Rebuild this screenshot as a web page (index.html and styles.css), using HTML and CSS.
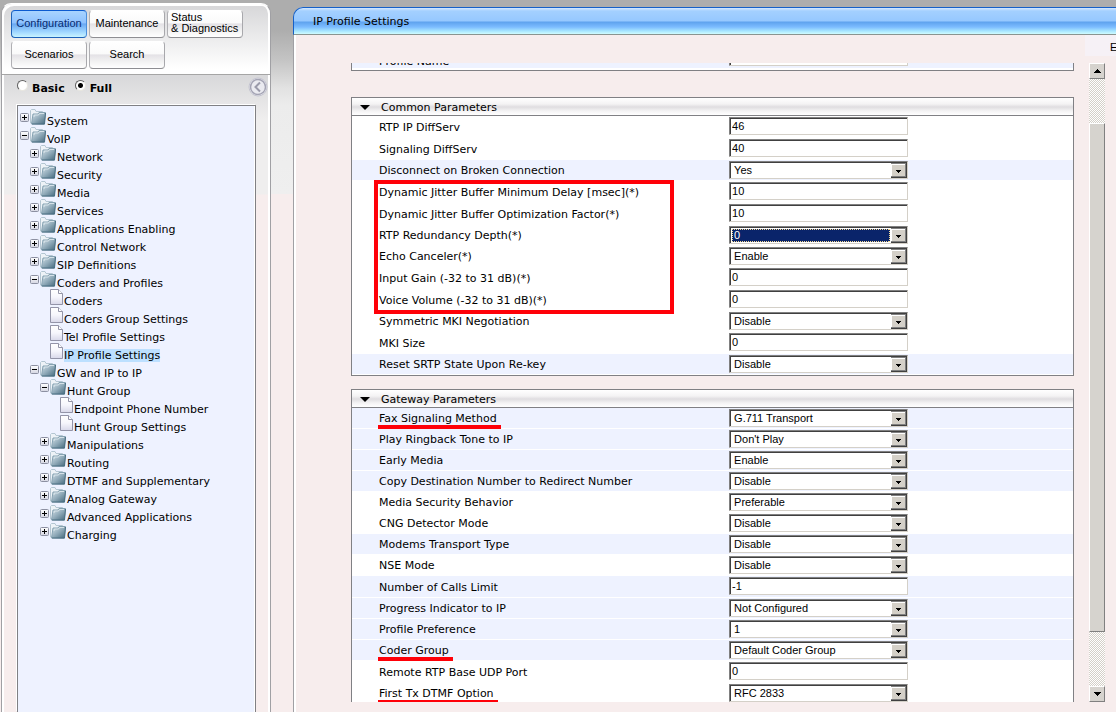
FILE: index.html
```html
<!DOCTYPE html>
<html lang="en">
<head>
<meta charset="utf-8">
<title>IP Profile Settings</title>
<link rel="stylesheet" href="styles.css">
</head>
<body>
<svg class="defs" aria-hidden="true">
  <defs>
    <linearGradient id="gFolder" x1="0" y1="0" x2="1" y2="1">
      <stop offset="0" stop-color="#d8e4ea"/><stop offset=".5" stop-color="#8fa9b8"/><stop offset="1" stop-color="#3f6478"/>
    </linearGradient>
    <linearGradient id="gPage" x1="0" y1="0" x2="0" y2="1">
      <stop offset="0" stop-color="#fff"/><stop offset=".5" stop-color="#f6f6fc"/><stop offset="1" stop-color="#d8d8ea"/>
    </linearGradient>
    <linearGradient id="gBox" x1="0" y1="0" x2="0" y2="1">
      <stop offset="0" stop-color="#fff"/><stop offset="1" stop-color="#d4d6e2"/>
    </linearGradient>
    <symbol id="folder" viewBox="0 0 17 16">
      <path d="M.5 14V1.500L1.500.5H5l1 2h6.500V14z" fill="#eef3f7" stroke="#b4c6d2"/>
      <path d="M1.500 15.500l1.500-10.500h5l1-1.500h7l-1.500 12z" fill="url(#gFolder)"/>
      <path d="M1.500 15l1.500-10h5l1-1.500h6.500" fill="none" stroke="#86a2b2"/>
      <path d="M15.500 4l-1 11H2" fill="none" stroke="#4a6f82"/>
      <path d="M4 8l.3-2h4.200l1-1.500h4.500" fill="none" stroke="#e3edf2" stroke-width=".8"/>
    </symbol>
    <symbol id="page" viewBox="0 0 13 16">
      <path d="M.5.5h8l4 4v11H.5z" fill="url(#gPage)" stroke="#9394a8"/>
      <path d="M8.500.5v4h4" fill="#fff" stroke="#9394a8"/>
    </symbol>
    <symbol id="plus" viewBox="0 0 9 9">
      <rect x=".5" y=".5" width="8" height="8" rx="1" fill="url(#gBox)" stroke="#8c90a2"/>
      <path d="M2 4.500h5M4.500 2v5" stroke="#000"/>
    </symbol>
    <symbol id="minus" viewBox="0 0 9 9">
      <rect x=".5" y=".5" width="8" height="8" rx="1" fill="url(#gBox)" stroke="#8c90a2"/>
      <path d="M2 4.500h5" stroke="#000"/>
    </symbol>
  </defs>
</svg>

<div class="app">
  <aside class="sidebar">
    <nav class="tabs">
      <button type="button" class="tab tab-active">Configuration</button>
      <button type="button" class="tab">Maintenance</button>
      <button type="button" class="tab tab-two">Status<br>&amp; Diagnostics</button>
      <button type="button" class="tab">Scenarios</button>
      <button type="button" class="tab">Search</button>
    </nav>
    <div class="mode">
      <input type="radio" name="mode" id="mode-basic"><label for="mode-basic">Basic</label>
      <input type="radio" name="mode" id="mode-full" checked><label for="mode-full">Full</label>
      <button type="button" class="collapse" aria-label="Collapse">
        <svg viewBox="0 0 20 20"><circle cx="10" cy="10" r="9" fill="#f4f4f8" stroke="#c4c4d0"/><circle cx="10" cy="10" r="7.500" fill="#eaeaf0" stroke="#a4a4b4" stroke-width="1.500"/><path d="M12 5.500L7.500 10l4.500 4.500" fill="none" stroke="#9a9aaa" stroke-width="2"/></svg>
      </button>
    </div>
    <ul class="tree">
      <li><svg class="tog"><use href="#plus"/></svg><svg class="fold"><use href="#folder"/></svg><a href="#">System</a></li>
      <li><svg class="tog"><use href="#minus"/></svg><svg class="fold"><use href="#folder"/></svg><a href="#">VoIP</a></li>
      <li class="l1"><svg class="tog"><use href="#plus"/></svg><svg class="fold"><use href="#folder"/></svg><a href="#">Network</a></li>
      <li class="l1"><svg class="tog"><use href="#plus"/></svg><svg class="fold"><use href="#folder"/></svg><a href="#">Security</a></li>
      <li class="l1"><svg class="tog"><use href="#plus"/></svg><svg class="fold"><use href="#folder"/></svg><a href="#">Media</a></li>
      <li class="l1"><svg class="tog"><use href="#plus"/></svg><svg class="fold"><use href="#folder"/></svg><a href="#">Services</a></li>
      <li class="l1"><svg class="tog"><use href="#plus"/></svg><svg class="fold"><use href="#folder"/></svg><a href="#">Applications Enabling</a></li>
      <li class="l1"><svg class="tog"><use href="#plus"/></svg><svg class="fold"><use href="#folder"/></svg><a href="#">Control Network</a></li>
      <li class="l1"><svg class="tog"><use href="#plus"/></svg><svg class="fold"><use href="#folder"/></svg><a href="#">SIP Definitions</a></li>
      <li class="l1"><svg class="tog"><use href="#minus"/></svg><svg class="fold"><use href="#folder"/></svg><a href="#">Coders and Profiles</a></li>
      <li class="l3"><svg class="leaf"><use href="#page"/></svg><a href="#">Coders</a></li>
      <li class="l3"><svg class="leaf"><use href="#page"/></svg><a href="#">Coders Group Settings</a></li>
      <li class="l3"><svg class="leaf"><use href="#page"/></svg><a href="#">Tel Profile Settings</a></li>
      <li class="l3"><svg class="leaf"><use href="#page"/></svg><a href="#" class="current">IP Profile Settings</a></li>
      <li class="l1"><svg class="tog"><use href="#minus"/></svg><svg class="fold"><use href="#folder"/></svg><a href="#">GW and IP to IP</a></li>
      <li class="l2"><svg class="tog"><use href="#minus"/></svg><svg class="fold"><use href="#folder"/></svg><a href="#">Hunt Group</a></li>
      <li class="l4"><svg class="leaf"><use href="#page"/></svg><a href="#">Endpoint Phone Number</a></li>
      <li class="l4"><svg class="leaf"><use href="#page"/></svg><a href="#">Hunt Group Settings</a></li>
      <li class="l2"><svg class="tog"><use href="#plus"/></svg><svg class="fold"><use href="#folder"/></svg><a href="#">Manipulations</a></li>
      <li class="l2"><svg class="tog"><use href="#plus"/></svg><svg class="fold"><use href="#folder"/></svg><a href="#">Routing</a></li>
      <li class="l2"><svg class="tog"><use href="#plus"/></svg><svg class="fold"><use href="#folder"/></svg><a href="#">DTMF and Supplementary</a></li>
      <li class="l2"><svg class="tog"><use href="#plus"/></svg><svg class="fold"><use href="#folder"/></svg><a href="#">Analog Gateway</a></li>
      <li class="l2"><svg class="tog"><use href="#plus"/></svg><svg class="fold"><use href="#folder"/></svg><a href="#">Advanced Applications</a></li>
      <li class="l2"><svg class="tog"><use href="#plus"/></svg><svg class="fold"><use href="#folder"/></svg><a href="#">Charging</a></li>
    </ul>
  </aside>

  <main class="main">
    <h1 class="title">IP Profile Settings</h1>
    <div class="toolbar"><button type="button" class="mode-link">E</button></div>
    <div class="viewport">
      <form class="scroll">
        <section class="group group-top">
          <div class="row row-in alt"><label for="p0">Profile Name</label><input type="text" id="p0"></div>
        </section>

        <section class="group group-common">
          <h2>Common Parameters</h2>
          <div class="row row-in"><label for="c1">RTP IP DiffServ</label><input type="text" id="c1" value="46"></div>
          <div class="row row-in"><label for="c2">Signaling DiffServ</label><input type="text" id="c2" value="40"></div>
          <div class="row alt"><label for="c3">Disconnect on Broken Connection</label><select id="c3"><option>Yes</option></select></div>
          <div class="marked">
            <div class="row row-in"><label for="c4">Dynamic Jitter Buffer Minimum Delay [msec](*)</label><input type="text" id="c4" value="10"></div>
            <div class="row row-in"><label for="c5">Dynamic Jitter Buffer Optimization Factor(*)</label><input type="text" id="c5" value="10"></div>
            <div class="row"><label for="c6">RTP Redundancy Depth(*)</label><select id="c6" class="picked"><option>0</option></select></div>
            <div class="row"><label for="c7">Echo Canceler(*)</label><select id="c7"><option>Enable</option></select></div>
            <div class="row row-in"><label for="c8">Input Gain (-32 to 31 dB)(*)</label><input type="text" id="c8" value="0"></div>
            <div class="row row-in"><label for="c9">Voice Volume (-32 to 31 dB)(*)</label><input type="text" id="c9" value="0"></div>
          </div>
          <div class="row"><label for="c10">Symmetric MKI Negotiation</label><select id="c10"><option>Disable</option></select></div>
          <div class="row row-in"><label for="c11">MKI Size</label><input type="text" id="c11" value="0"></div>
          <div class="row alt"><label for="c12">Reset SRTP State Upon Re-key</label><select id="c12"><option>Disable</option></select></div>
        </section>

        <section class="group group-gateway">
          <h2>Gateway Parameters</h2>
          <div class="row alt"><label for="g1"><span class="under">Fax Signaling Method</span></label><select id="g1"><option>G.711 Transport</option></select></div>
          <div class="row alt"><label for="g2">Play Ringback Tone to IP</label><select id="g2"><option>Don't Play</option></select></div>
          <div class="row alt"><label for="g3">Early Media</label><select id="g3"><option>Enable</option></select></div>
          <div class="row alt"><label for="g4">Copy Destination Number to Redirect Number</label><select id="g4"><option>Disable</option></select></div>
          <div class="row"><label for="g5">Media Security Behavior</label><select id="g5"><option>Preferable</option></select></div>
          <div class="row"><label for="g6">CNG Detector Mode</label><select id="g6"><option>Disable</option></select></div>
          <div class="row alt"><label for="g7">Modems Transport Type</label><select id="g7"><option>Disable</option></select></div>
          <div class="row"><label for="g8">NSE Mode</label><select id="g8"><option>Disable</option></select></div>
          <div class="row row-in alt"><label for="g9">Number of Calls Limit</label><input type="text" id="g9" value="-1"></div>
          <div class="row alt"><label for="g10">Progress Indicator to IP</label><select id="g10"><option>Not Configured</option></select></div>
          <div class="row alt"><label for="g11">Profile Preference</label><select id="g11"><option>1</option></select></div>
          <div class="row alt"><label for="g12"><span class="under">Coder Group</span></label><select id="g12"><option>Default Coder Group</option></select></div>
          <div class="row row-in"><label for="g13">Remote RTP Base UDP Port</label><input type="text" id="g13" value="0"></div>
          <div class="row"><label for="g14"><span class="under">First Tx DTMF Option</span></label><select id="g14"><option>RFC 2833</option></select></div>
        </section>
      </form>
      <div class="scrollbar">
        <button type="button" class="sb-btn" aria-label="Scroll up"><svg viewBox="0 0 7 4"><path d="M3 0h1v1h1v1h1v1h1v1H0V3h1V2h1V1h1z"/></svg></button>
        <div class="sb-above"></div>
        <div class="sb-thumb"></div>
        <div class="sb-below"></div>
        <button type="button" class="sb-btn" aria-label="Scroll down"><svg viewBox="0 0 7 4"><path d="M0 0h7v1H6v1H5v1H4v1H3V3H2V2H1V1H0z"/></svg></button>
      </div>
    </div>
  </main>
</div>
</body>
</html>
```

FILE: styles.css
```css
*, ::before, ::after { box-sizing: border-box; }

body {
  margin: 0;
  color: #000;
  font: 11px/13px "DejaVu Sans", Verdana, sans-serif;
  background: #f7eded linear-gradient(#adadad 0, #adadad 30px, #c4c4c4 60px, #e2e2e2 88px, #ececec 105px, #efefef 194px) no-repeat 0 0 / 100% 194px;
}

.defs { position: absolute; width: 0; height: 0; }

.app {
  display: flex;
  height: 100vh;
  overflow: hidden;
}

button { font: inherit; color: inherit; padding: 0; }

/* Sidebar */
.sidebar {
  flex: none;
  display: flex;
  flex-direction: column;
  width: 270px;
  margin: 3px 22px 0 1px;
  border: 1px solid #a0a0a4;
  border-top-color: #fff;
  border-bottom: 0;
  border-radius: 10px 10px 0 0;
  background: linear-gradient(#d9d9db 0, #d9d9db 74px, #efeeee 115px, #efeeee 190px, #f7eded 191px);
  box-shadow: inset 2px 2px #fff, inset -2px 0 #fff;
}

.tabs {
  display: grid;
  grid-template-columns: repeat(3, 76px);
  grid-auto-rows: 28px;
  gap: 3px 2px;
  padding: 6px 9px 5px;
  border-bottom: 1px solid #a5a5a5;
  border-radius: 10px 10px 0 0;
  background: linear-gradient(#d6d6d8, #fff 65px);
  box-shadow: inset 2px 2px #fff, inset -2px 0 #fff;
}

.tab {
  padding-bottom: 2px;
  border: 1px solid #fff;
  border-right-color: #a8a8ac;
  border-bottom-color: #8e8e92;
  border-left-color: #b0b0b4;
  border-radius: 4px;
  font: 11px/11px "Liberation Sans", Arial, sans-serif;
  background: linear-gradient(#fff, #fafafa 45%, #e4e2e6 50%, #f2f2f2 75%, #fff);
}

.tab-two { padding-left: 3px; text-align: left; }

.tab-active {
  border-color: #0c5bd0 #4a8edc #1d62b8 #1d62b8;
  color: #082c70;
  background: linear-gradient(#a8d4ff, #8fc2ff 45%, #6aa8f2 50%, #9fd6ff 80%, #c8f4ff);
}

.mode {
  display: flex;
  align-items: center;
  height: 30px;
  padding: 0 2px 7px 15px;
  font-weight: bold;
}

.mode input {
  flex: none;
  appearance: none;
  width: 11px;
  height: 11px;
  margin: 0 4px 3px 0;
  border: 1px solid;
  border-color: #606060 #e8e6e0 #e8e6e0 #606060;
  border-radius: 50%;
  background: #fff;
}

.mode input:checked { background: radial-gradient(#000 0, #000 2px, #fff 3px); }

.mode label { margin-right: 10px; padding-top: 3px; }

.collapse {
  width: 20px;
  height: 20px;
  margin-left: auto;
  border: 0;
  background: none;
}

.collapse svg { display: block; width: 20px; height: 20px; }

.tree {
  flex: 1;
  margin: 0 14px 0 15px;
  padding: 3px 2px;
  list-style: none;
  border: 1px solid #808084;
  border-bottom: 0;
  background: #eef2ff;
  box-shadow: -1px -1px #fff, inset -1px 0 #fff;
}

.tree li {
  display: flex;
  align-items: flex-start;
  height: 18px;
}

.tree .l1 { padding-left: 10px; }
.tree .l2 { padding-left: 20px; }
.tree .l3 { padding-left: 30px; }
.tree .l4 { padding-left: 40px; }

.tree svg { flex: none; height: 16px; }
.tree .tog { width: 9px; height: 9px; margin: 4px 1px 0 0; }
.tree .fold { width: 17px; }
.tree .leaf { width: 13px; margin-right: 1px; }

.tree a {
  margin-top: 6px;
  color: inherit;
  text-decoration: none;
  white-space: nowrap;
}

.tree .current { background: #bde0ff; }

/* Main panel */
.main {
  flex: 1;
  min-width: 0;
  display: flex;
  flex-direction: column;
  margin-top: 7px;
  border-left: 1px solid #a0a0a4;
  border-radius: 10px 0 0 0;
  background: #f7eded;
  box-shadow: inset 2px 0 #fff;
}

.title {
  flex: none;
  margin: 0 0 0 -1px;
  height: 28px;
  padding-left: 19px;
  border-top: 1px solid #1560c8;
  border-left: 1px solid #1560c8;
  border-bottom: 1px solid #8a9490;
  border-radius: 10px 0 0 0;
  font-size: 11px;
  font-weight: normal;
  line-height: 28px;
  background: linear-gradient(#d4e8ff, #a4d0ff 3px, #96c8ff 13px, #5ea2ee 14px, #7cbcff 19px, #a8e6ff 23px, #d0fcff);
}

.toolbar {
  flex: none;
  align-self: flex-end;
  width: 31px;
  height: 21px;
  overflow: hidden;
  background: #f6f1f6;
}

.mode-link {
  padding: 6px 0 0 25px;
  border: 0;
  background: none;
  font: 11px/13px "Liberation Sans", Arial, sans-serif;
}

.viewport {
  flex: 1;
  min-height: 0;
  display: flex;
  gap: 15px;
  margin: 7px 11px 10px 57px;
}

.scroll {
  flex: 1;
  min-width: 0;
  overflow: hidden;
}

.group {
  border: 1px solid #808084;
  background: #fff;
}

.group-top { margin-top: -17px; padding-bottom: 1px; }
.group-common { margin-top: 26px; }
.group-gateway { margin-top: 13px; }

.group h2 {
  display: flex;
  align-items: center;
  gap: 11px;
  height: 18px;
  margin: 0;
  padding: 1px 0 0 8px;
  border-bottom: 1px solid #808084;
  font-size: 11px;
  font-weight: normal;
  background: linear-gradient(#fff, #f4f3f4 6px, #dfdde0 9px, #f4f3f4 13px, #fff);
}

.group h2::before {
  content: "";
  border: 5px solid transparent;
  border-top-color: #000;
  border-bottom: 0;
}

.row {
  display: grid;
  grid-template-columns: 52.3% 179px;
  align-items: start;
  height: 21px;
  padding-top: 1px;
}

.row-in { height: 22px; }

.alt {
  background: #eef2ff;
  border-bottom: 1px solid #fff;
}

.row label {
  padding: 3px 0 0 27px;
  white-space: nowrap;
}

.row-in label { padding-top: 4px; }
.group-top label { padding-top: 7px; }

.row input,
.row select {
  width: 179px;
  height: 18px;
  margin: 0;
  border: 1px solid;
  border-color: #808080 #d4d0c8 #d4d0c8 #808080;
  border-radius: 0;
  outline: 0;
  color: #000;
  font: 11px/13px "Liberation Sans", Arial, sans-serif;
  background: #fff;
  box-shadow: inset 1px 1px #404040;
}

.row input { padding: 1px 2px; }

.row select {
  appearance: none;
  padding: 0 18px 0 4px;
  background: #fff url("data:image/svg+xml,%3Csvg xmlns='http://www.w3.org/2000/svg' width='16' height='15' shape-rendering='crispEdges'%3E%3Cpath d='M0 0h16v15H0z' fill='%23404040'/%3E%3Cpath d='M0 0h15v14H0z' fill='%23808080'/%3E%3Cpath d='M0 1h14v12H0z' fill='%23fff'/%3E%3Cpath d='M1 2h13v11H1z' fill='%23d4d0c8'/%3E%3Cpath d='M5 7h5v1H9v1H8v1H7V9H6V8H5z'/%3E%3C/svg%3E") no-repeat right 0 top 1px;
}

.row .picked {
  color: #fff;
  background:
    url("data:image/svg+xml,%3Csvg xmlns='http://www.w3.org/2000/svg' width='16' height='15' shape-rendering='crispEdges'%3E%3Cpath d='M0 0h16v15H0z' fill='%23404040'/%3E%3Cpath d='M0 0h15v14H0z' fill='%23808080'/%3E%3Cpath d='M0 1h14v12H0z' fill='%23fff'/%3E%3Cpath d='M1 2h13v11H1z' fill='%23d4d0c8'/%3E%3Cpath d='M5 7h5v1H9v1H8v1H7V9H6V8H5z'/%3E%3C/svg%3E") no-repeat right 0 top 1px,
    url("data:image/svg+xml,%3Csvg xmlns='http://www.w3.org/2000/svg' width='158' height='13'%3E%3Cpath d='M0 0h158v13H0z' fill='%230a246a'/%3E%3Cpath d='M0 .5h158M0 12.500h158M.5 0v13M157.500 0v13' fill='none' stroke='%23f5db95' stroke-dasharray='1 1'/%3E%3C/svg%3E") no-repeat 2px 2px,
    #fff;
}

/* Highlight marks */
.marked { position: relative; }

.marked::after {
  content: "";
  position: absolute;
  top: -1px;
  bottom: -3px;
  left: 22px;
  width: 300px;
  border: 4px solid #ff0008;
  pointer-events: none;
}

.under { position: relative; }

.under::after {
  content: "";
  position: absolute;
  right: -4px;
  bottom: -4px;
  left: -1px;
  height: 4px;
  background: #ff0008;
}

/* Scrollbar */
.scrollbar {
  flex: none;
  display: flex;
  flex-direction: column;
  width: 16px;
  background: repeating-conic-gradient(#d4d0c8 0 25%, #fff 0 50%) 0 0 / 2px 2px;
}

.sb-btn,
.sb-thumb {
  border: 1px solid;
  border-color: #fff #808080 #808080 #fff;
  background: #d6d3ce;
}

.sb-btn {
  flex: none;
  display: flex;
  align-items: center;
  justify-content: center;
  height: 16px;
}

.sb-btn svg { width: 7px; height: 4px; }

.sb-above { flex: 44 0 0; }
.sb-thumb { flex: 509 0 0; }
.sb-below { flex: 54 0 0; }
```
